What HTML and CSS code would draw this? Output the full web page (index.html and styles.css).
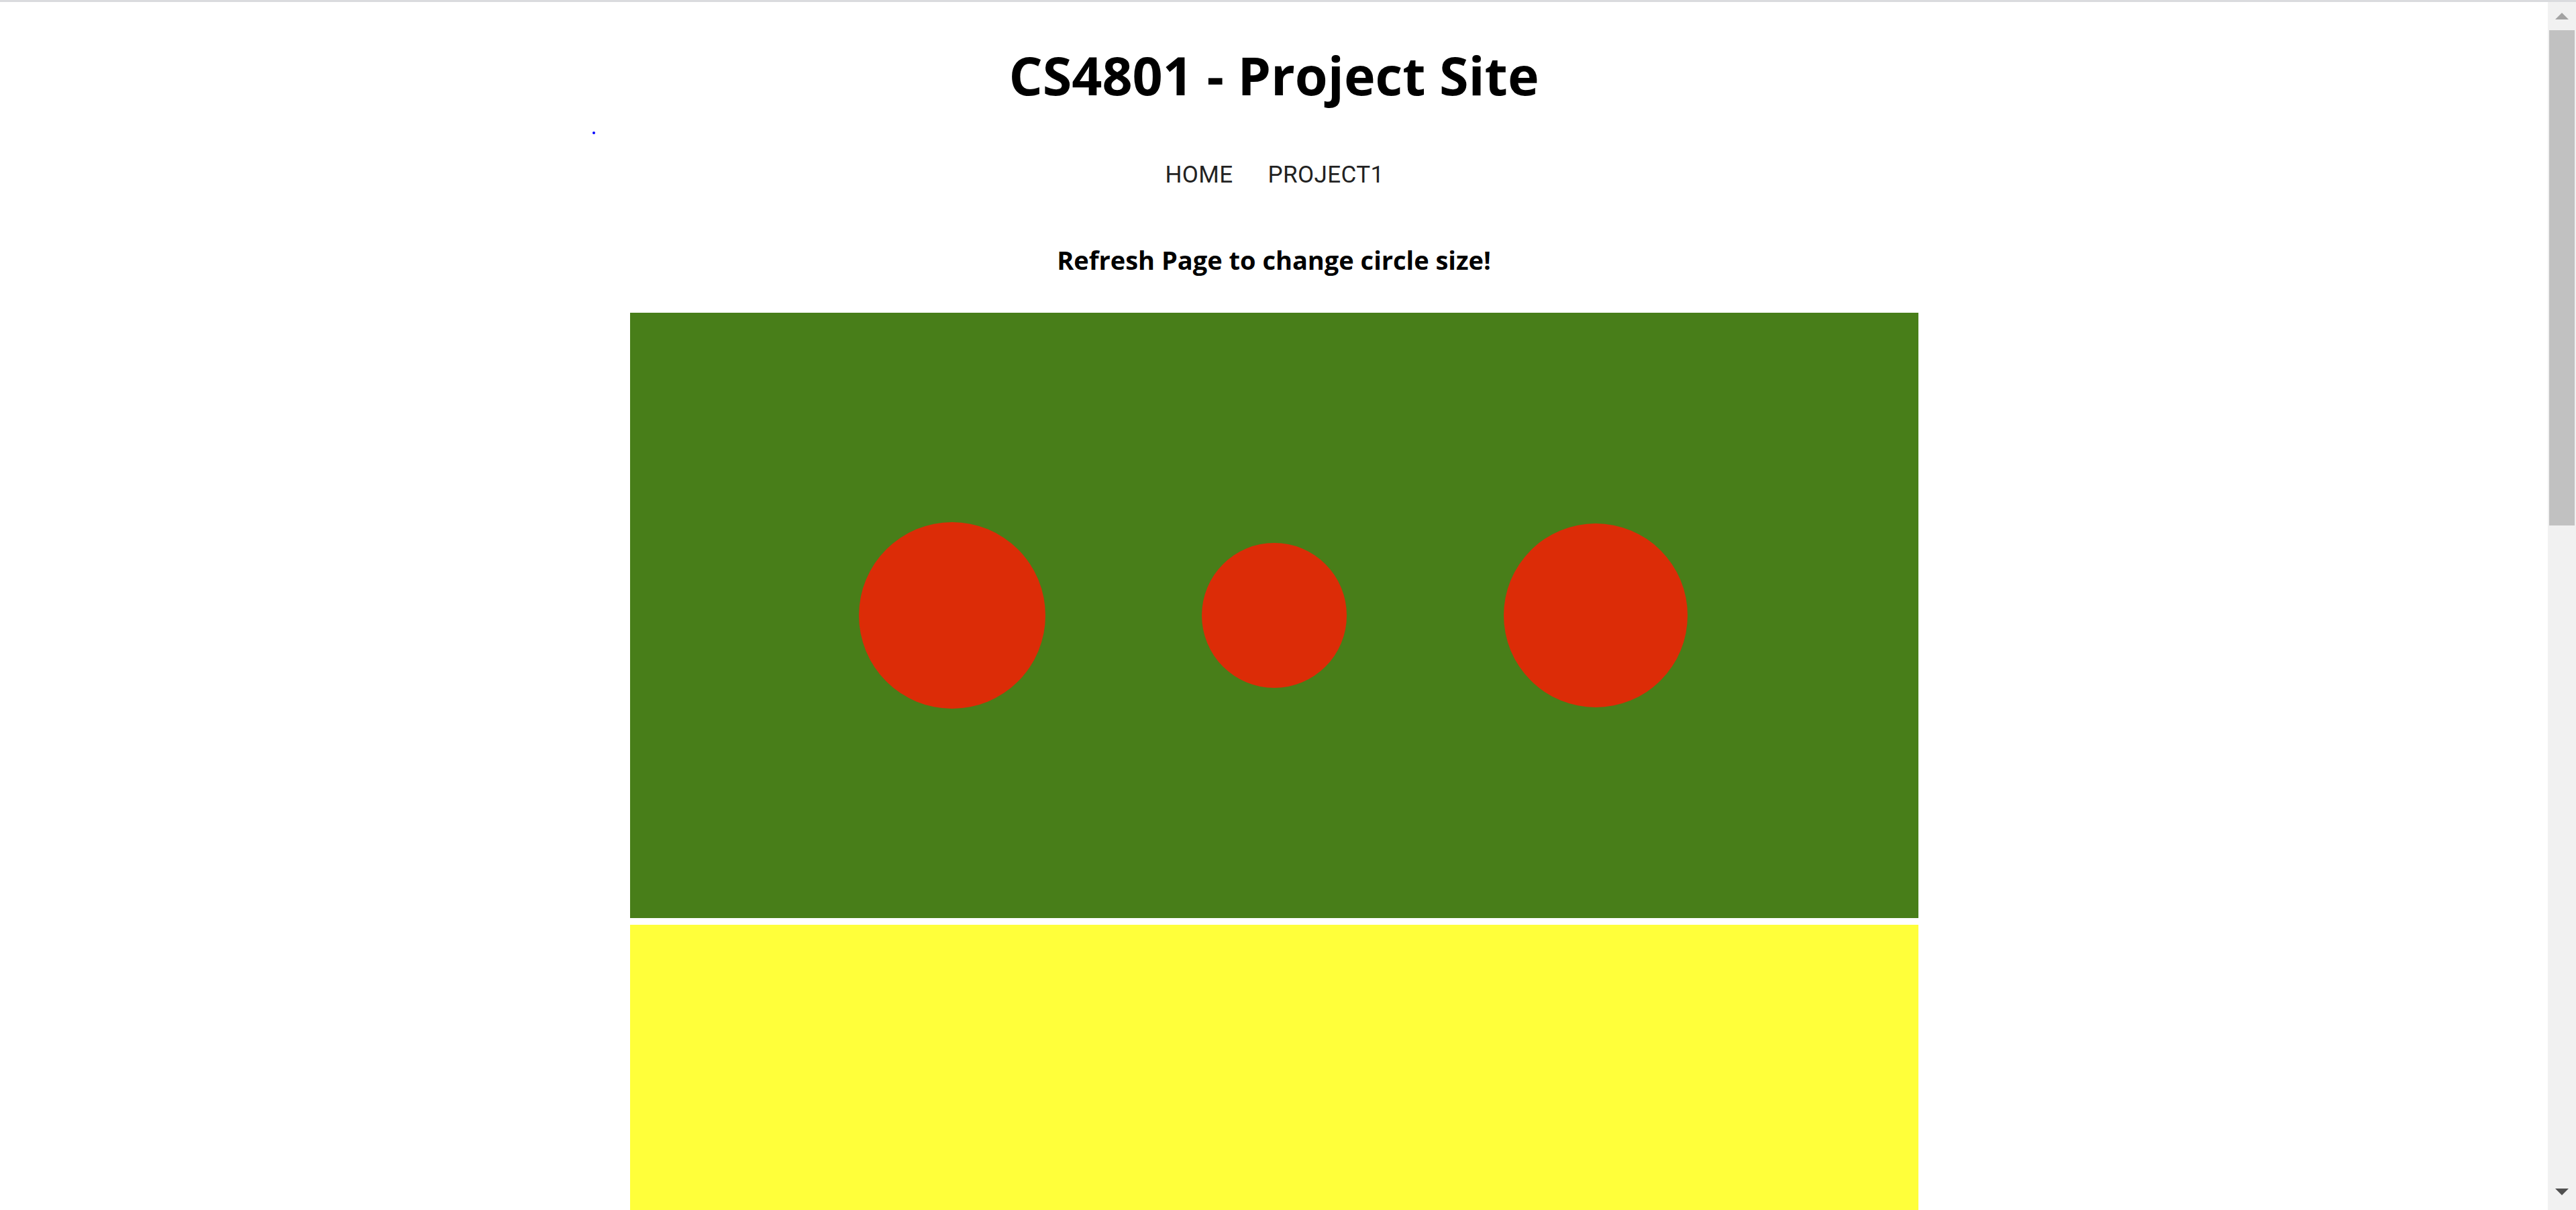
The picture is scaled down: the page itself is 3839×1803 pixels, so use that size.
FILE: index.html
```html
<!DOCTYPE html>
<html lang="en">
<head>
<meta charset="utf-8">
<title>CS4801 - Project Site</title>
<link rel="stylesheet" href="styles.css">
</head>
<body>
<div class="topstrip"></div>
<div class="frame">
  <main class="page">
    <h1 class="title">CS4801 - Project Site</h1>
    <div class="dot-row"><span class="dot"></span></div>
    <nav class="nav">
      <a class="nav-link" href="#">HOME</a>
      <a class="nav-link" href="#">PROJECT1</a>
    </nav>
    <h4 class="subtitle">Refresh Page to change circle size!</h4>
    <div class="panels">
      <svg class="panel" width="1920" height="902" viewBox="0 0 1920 902">
        <rect x="0" y="0" width="1920" height="902" fill="#487e19"/>
        <circle cx="480" cy="451" r="139" fill="#dc2c07"/>
        <circle cx="960" cy="451" r="108" fill="#dc2c07"/>
        <circle cx="1439" cy="451" r="137" fill="#dc2c07"/>
      </svg>
      <div class="panel-yellow"></div>
    </div>
  </main>
  <div class="scrollbar">
    <div class="sb-btn">
      <svg width="20" height="10" viewBox="0 0 20 10"><polygon points="10,0 20,10 0,10" fill="#a3a3a3"/></svg>
    </div>
    <div class="sb-track">
      <div class="sb-thumb"></div>
    </div>
    <div class="sb-btn sb-btn-down">
      <svg width="20" height="10" viewBox="0 0 20 10"><polygon points="0,0 20,0 10,10" fill="#505050"/></svg>
    </div>
  </div>
</div>
</body>
</html>
```
FILE: styles.css
```css
html, body {
  margin: 0;
  padding: 0;
  background: #ffffff;
  overflow: hidden;
}

body {
  width: 3839px;
  height: 1803px;
}

.topstrip {
  height: 3px;
  background: #dadbde;
}

.frame {
  display: flex;
  height: 1800px;
}

.page {
  flex: 1;
  display: flex;
  flex-direction: column;
  align-items: center;
  overflow: hidden;
}

.title {
  margin: 69px 0 0 0;
  height: 80px;
  font-family: "Open Sans", "Liberation Sans", sans-serif;
  font-weight: 700;
  font-size: 79px;
  line-height: 80px;
  color: #000;
  white-space: nowrap;
}

.dot-row {
  align-self: stretch;
  height: 0;
  position: relative;
}

.dot {
  position: absolute;
  left: 883px;
  top: 44px;
  width: 4px;
  height: 4px;
  border-radius: 50%;
  background: #0000ff;
}

.nav {
  margin-top: 91px;
  height: 35px;
  display: flex;
  gap: 52px;
  padding-left: 2px;
}

.nav-link {
  font-family: Roboto, "Liberation Sans", sans-serif;
  font-size: 35px;
  line-height: 35px;
  letter-spacing: 0.4px;
  color: #222222;
  text-decoration: none;
}

.subtitle {
  margin: 89px 0 0 0;
  height: 41px;
  font-family: "Open Sans", "Liberation Sans", sans-serif;
  font-weight: 700;
  font-size: 38px;
  line-height: 41px;
  color: #000;
  white-space: nowrap;
}

.panels {
  margin-top: 58px;
  display: flex;
  flex-direction: column;
  gap: 10px;
  width: 1920px;
}

.panel {
  display: block;
}

.panel-yellow {
  height: 600px;
  background: #ffff3a;
}

.scrollbar {
  width: 42px;
  flex: none;
  background: #f1f1f1;
  display: flex;
  flex-direction: column;
}

.sb-btn {
  height: 42px;
  display: flex;
  align-items: center;
  justify-content: center;
  flex: none;
}

.sb-btn svg {
  display: block;
}

.sb-btn-down {
  align-items: flex-start;
  padding-top: 16px;
  height: 32px;
}

.sb-track {
  flex: 1;
  padding: 0 2px;
}

.sb-thumb {
  height: 738px;
  background: #c1c1c1;
}
```
